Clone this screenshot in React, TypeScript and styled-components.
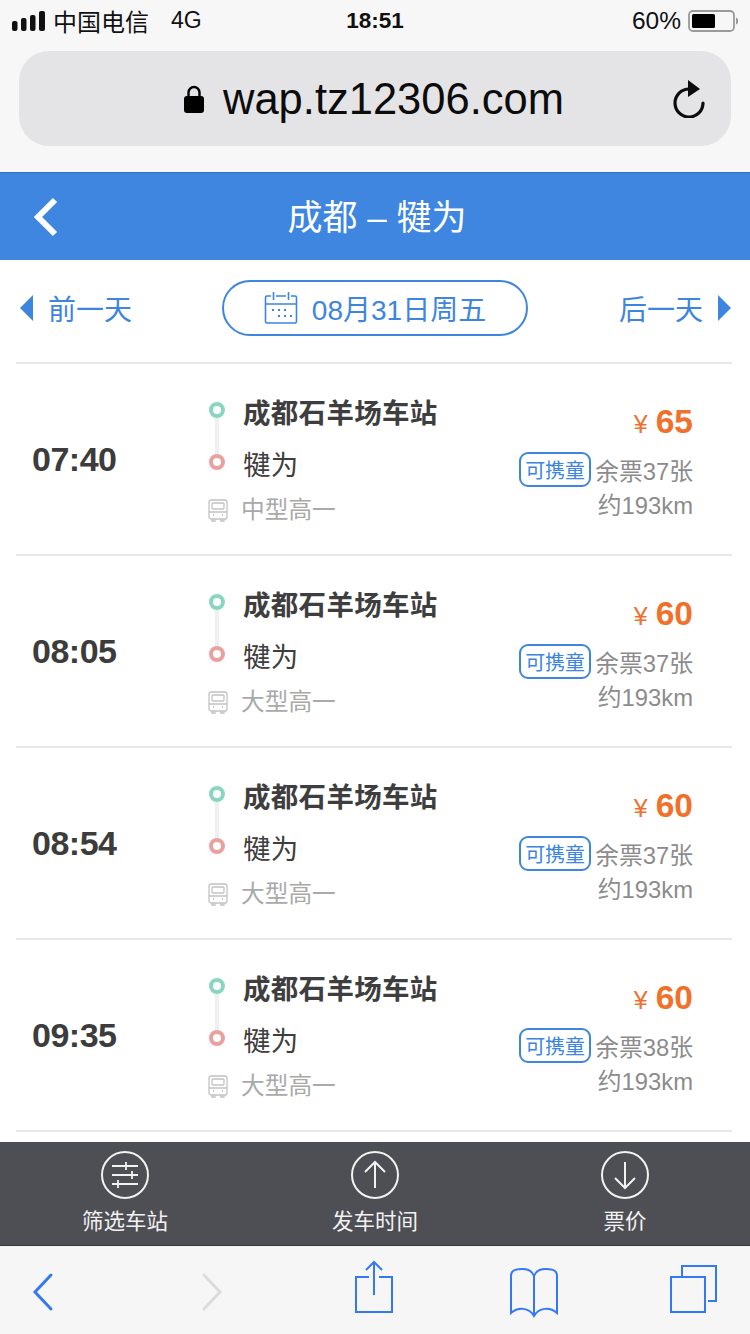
import React from 'react';
import styled, { createGlobalStyle } from 'styled-components';

const blue = '#3d85de';
const cjk = '"Liberation Sans", "Noto Sans CJK SC", sans-serif';

const GlobalStyle = createGlobalStyle`
  html, body { margin: 0; padding: 0; background: #fff; }
  body { font-family: ${cjk}; }
  * { box-sizing: border-box; }
`;

const Page = styled.div`
  width: 750px;
  height: 1334px;
  display: flex;
  flex-direction: column;
  overflow: hidden;
  background: #fff;
`;

/* safari chrome on top */
const TopChrome = styled.div`
  height: 172px;
  background: #f7f7f7;
  padding: 0 19px;
`;

const StatusBar = styled.div`
  height: 51px;
  padding: 0 0 10px;
  margin: 0 -7px;
  display: grid;
  grid-template-columns: 1fr auto 1fr;
  align-items: center;
  color: #111;
  font-size: 24px;
`;

const StatusLeft = styled.div`
  display: flex;
  align-items: center;
`;

const Carrier = styled.span`
  margin-left: 7px;
`;

const Network = styled.span`
  margin-left: 22px;
  font-size: 23px;
`;

const Clock = styled.div`
  font-weight: 700;
  font-size: 22.5px;
`;

const StatusRight = styled.div`
  display: flex;
  align-items: center;
  justify-content: flex-end;
  gap: 7px;
  font-size: 24.5px;
`;

const UrlBar = styled.div`
  height: 95px;
  border-radius: 30px;
  background: #e4e4e6;
  display: grid;
  grid-template-columns: 1fr auto;
  align-items: center;
  padding: 0 25px 0 165px;
`;

const UrlText = styled.div`
  display: flex;
  align-items: center;
  gap: 19px;
  color: #0c0c0c;
  font-size: 43.5px;
`;

const UrlHost = styled.span`
  padding-top: 2px;
`;

const Header = styled.div`
  height: 88px;
  background: #3e86df;
  border-top: 1px solid #3570bd;
  display: grid;
  grid-template-columns: 1fr auto 1fr;
  align-items: center;
  padding-left: 32px;
  color: #fff;
`;

const HeaderTitle = styled.div`
  font-size: 35px;
  margin: -4px 0 0 -28px;
`;

const DateRow = styled.div`
  height: 102px;
  padding: 0 19px 6px 20px;
  display: flex;
  align-items: center;
  justify-content: space-between;
  color: ${blue};
  font-size: 28px;
`;

const DayLink = styled.div`
  display: flex;
  align-items: center;
  gap: 15px;
`;

const DatePill = styled.div`
  width: 306px;
  height: 56px;
  margin-left: -1px;
  border: 2px solid ${blue};
  border-radius: 28px;
  display: flex;
  align-items: center;
  justify-content: center;
  gap: 14px;
`;

const List = styled.div`
  flex: 1;
  margin: 0 18px 0 16px;
  border-top: 2px solid #e8e8e8;
`;

const Trip = styled.div`
  height: 192px;
  border-bottom: 2px solid #e8e8e8;
  display: grid;
  grid-template-columns: 176px 1fr auto;
  padding: 0 39px 0 16px;
  align-items: center;
`;

const DepartTime = styled.div`
  font-size: 34px;
  font-weight: 700;
  color: #3c3c3c;
  letter-spacing: -0.5px;
`;

const Route = styled.div`
  display: grid;
  grid-template-columns: 35px 1fr;
  grid-auto-rows: 52px;
  align-items: center;
  align-content: center;
  padding-top: 6px;
`;

const Marker = styled.div<{ $end?: boolean }>`
  position: relative;
  width: 16px;
  height: 16px;
  margin-left: 1px;
  border-radius: 50%;
  border: 4px solid ${(p) => (p.$end ? '#e9a09f' : '#8bd6c1')};

  ${(p) => (p.$end ? '' : `
    &::after {
      content: '';
      position: absolute;
      left: 2px;
      top: 12px;
      width: 4px;
      height: 36px;
      background: #efefef;
    }
  `)}
`;

const Station = styled.div<{ $strong?: boolean }>`
  font-size: 27.5px;
  letter-spacing: 0.3px;
  color: #3e3e3e;
  font-weight: ${(p) => (p.$strong ? 700 : 400)};
  padding-top: 2px;
`;

const CoachIcon = styled.svg`
  display: block;
  margin-top: -7px;
`;

const CoachType = styled.div`
  font-size: 23.7px;
  color: #a9a9a9;
  margin-left: -2px;
  margin-top: -12px;
`;

const Tickets = styled.div`
  display: flex;
  flex-direction: column;
  align-items: flex-end;
  color: #8c8c8c;
  font-size: 23.8px;
  padding-top: 1px;
`;

const Price = styled.div`
  color: #f0712c;
  font-size: 33.5px;
  font-weight: 700;
  display: flex;
  align-items: baseline;
  gap: 8px;
  height: 46px;
  margin-top: 8px;
`;

const Yen = styled.span`
  font-size: 25px;
  font-weight: 400;
`;

const SeatLine = styled.div`
  display: flex;
  align-items: center;
  gap: 4px;
  margin-top: 2px;
  height: 36px;
`;

const ChildTag = styled.span`
  width: 72px;
  height: 35px;
  border: 2px solid ${blue};
  border-radius: 9px;
  color: ${blue};
  font-size: 20px;
  display: flex;
  align-items: center;
  justify-content: center;
`;

const Distance = styled.div`
  height: 36px;
  line-height: 36px;
  margin-top: 1px;
`;

const ActionBar = styled.div`
  height: 104px;
  background: #4e4f54;
  border-bottom: 1px solid #36363a;
  display: grid;
  grid-template-columns: repeat(3, 250px);
  flex-shrink: 0;
`;

const Action = styled.div`
  display: flex;
  flex-direction: column;
  align-items: center;
  padding-top: 9px;
  gap: 5px;
  color: #f2f2f2;
  font-size: 21.5px;
`;

const SafariBar = styled.div`
  height: 88px;
  background: #f6f6f6;
  flex-shrink: 0;
  padding-left: 13px;
  display: grid;
  grid-template-columns: 169px 162px 160px 159px 60px;
  align-items: center;
`;

const ToolIcon = styled.svg`
  display: block;
`;

const trips = [
  { time: '07:40', type: '中型高一', price: 65, left: 37 },
  { time: '08:05', type: '大型高一', price: 60, left: 37 },
  { time: '08:54', type: '大型高一', price: 60, left: 37 },
  { time: '09:35', type: '大型高一', price: 60, left: 38 },
];

const Triangle = ({ flip }: { flip?: boolean }) => (
  <svg width="13" height="26" viewBox="0 0 13 26">
    <path d={flip ? 'M0 0L13 13L0 26Z' : 'M13 0L0 13L13 26Z'} fill={blue} />
  </svg>
);

export default function App() {
  return (
    <Page>
      <GlobalStyle />
      <TopChrome>
        <StatusBar>
          <StatusLeft>
            <svg width="34" height="20" viewBox="0 0 34 20">
              <rect x="0" y="10" width="5.500" height="10" rx="2" fill="#111" />
              <rect x="9" y="7" width="5.500" height="13" rx="2" fill="#111" />
              <rect x="18" y="4" width="5.500" height="16" rx="2" fill="#111" />
              <rect x="27" y="0" width="6" height="20" rx="2" fill="#111" />
            </svg>
            <Carrier>中国电信</Carrier>
            <Network>4G</Network>
          </StatusLeft>
          <Clock>18:51</Clock>
          <StatusRight>
            <span>60%</span>
            <svg width="50" height="22" viewBox="0 0 50 22">
              <rect x="1" y="1" width="45" height="20" rx="4" fill="none" stroke="#9a9a9a" strokeWidth="1.800" />
              <rect x="4" y="4" width="23" height="14" rx="1.500" fill="#000" />
              <path d="M48 7.500L50 9v4l-2 1.500z" fill="#9a9a9a" />
            </svg>
          </StatusRight>
        </StatusBar>
        <UrlBar>
          <UrlText>
            <svg width="20" height="30" viewBox="0 0 20 30">
              <path d="M4.500 13V8.500a5.500 5.500 0 0 1 11 0V13" fill="none" stroke="#000" strokeWidth="2.400" />
              <rect x="0" y="12" width="20" height="17" rx="3" fill="#000" />
            </svg>
            <UrlHost>wap.tz12306.com</UrlHost>
          </UrlText>
          <svg width="34" height="38" viewBox="0 0 34 38">
            <path d="M17 9A14 14 0 1 0 31 23" fill="none" stroke="#0c0c0c" strokeWidth="3.200" strokeLinecap="round" />
            <path d="M16 0L28 9L16 17Z" fill="#0c0c0c" />
          </svg>
        </UrlBar>
      </TopChrome>

      <Header>
        <svg width="28" height="40" viewBox="0 0 28 40">
          <path d="M23 3L6 20L23 37" fill="none" stroke="#fff" strokeWidth="6" />
        </svg>
        <HeaderTitle>成都 – 犍为</HeaderTitle>
      </Header>

      <DateRow>
        <DayLink>
          <Triangle />
          <span>前一天</span>
        </DayLink>
        <DatePill>
          <svg width="34" height="34" viewBox="0 0 34 34" fill="none" stroke={blue} strokeWidth="1.600">
            <path d="M7 5H3a1.500 1.500 0 0 0-1.500 1.500v24A1.500 1.500 0 0 0 3 32h28a1.500 1.500 0 0 0 1.500-1.500v-24A1.500 1.500 0 0 0 31 5h-4" />
            <path d="M12 5h10M9.500 1v8M24.500 1v8M1.500 13h31" />
            <path d="M8 19h2M14 19h2M20 19h2M14 25h2M20 25h2M26 25h2" strokeWidth="2" />
          </svg>
          <span>08月31日周五</span>
        </DatePill>
        <DayLink>
          <span>后一天</span>
          <Triangle flip />
        </DayLink>
      </DateRow>

      <List>
        {trips.map((trip) => (
          <Trip key={trip.time}>
            <DepartTime>{trip.time}</DepartTime>
            <Route>
              <Marker />
              <Station $strong>成都石羊场车站</Station>
              <Marker $end />
              <Station>犍为</Station>
              <CoachIcon width="20" height="23" viewBox="0 0 20 23" fill="none" stroke="#c2c2c2" strokeWidth="1.300">
                <rect x="1" y="1" width="18" height="19" rx="2" />
                <rect x="4" y="4" width="12" height="6" rx="1" />
                <path d="M1 13h18M4 20v2h3v-2M13 20v2h3v-2" />
                <path d="M5 16h1M14 16h1" strokeWidth="2" />
              </CoachIcon>
              <CoachType>{trip.type}</CoachType>
            </Route>
            <Tickets>
              <Price>
                <Yen>¥</Yen>
                <span>{trip.price}</span>
              </Price>
              <SeatLine>
                <ChildTag>可携童</ChildTag>
                <span>余票{trip.left}张</span>
              </SeatLine>
              <Distance>约193km</Distance>
            </Tickets>
          </Trip>
        ))}
      </List>

      <ActionBar>
        <Action>
          <svg width="48" height="48" viewBox="0 0 48 48" fill="none" stroke="#f2f2f2" strokeWidth="2">
            <circle cx="24" cy="24" r="23" />
            <path d="M11 15h26M11 24h26M11 33h26" />
            <path d="M25 11v8M31 20v8M17 29v8" strokeWidth="1.800" />
          </svg>
          <span>筛选车站</span>
        </Action>
        <Action>
          <svg width="48" height="48" viewBox="0 0 48 48" fill="none" stroke="#f2f2f2" strokeWidth="2">
            <circle cx="24" cy="24" r="23" />
            <path d="M24 37V12M14 21L24 11L34 21" />
          </svg>
          <span>发车时间</span>
        </Action>
        <Action>
          <svg width="48" height="48" viewBox="0 0 48 48" fill="none" stroke="#f2f2f2" strokeWidth="2">
            <circle cx="24" cy="24" r="23" />
            <path d="M24 11V36M14 27L24 37L34 27" />
          </svg>
          <span>票价</span>
        </Action>
      </ActionBar>

      <SafariBar>
        <ToolIcon width="60" height="60" viewBox="0 0 60 60" fill="none" stroke="#3478f6" strokeWidth="3" strokeLinecap="round">
          <path d="M38 15L22 32L38 49" />
        </ToolIcon>
        <ToolIcon width="60" height="60" viewBox="0 0 60 60" fill="none" stroke="#dcdcdc" strokeWidth="3" strokeLinecap="round">
          <path d="M22 15L38 32L22 49" />
        </ToolIcon>
        <ToolIcon width="60" height="60" viewBox="0 0 60 60" fill="none" stroke="#3478f6" strokeWidth="2">
          <path d="M25 17H12V52H48V17H35" />
          <path d="M30 35V2M22 10L30 2L38 10" />
        </ToolIcon>
        <ToolIcon width="60" height="60" viewBox="0 0 60 60" fill="none" stroke="#3478f6" strokeWidth="2">
          <path d="M30 16C28 11 24 9 19 9C14 9 7 9 7 16V53C14 47 25 47 30 56C35 47 46 47 53 53V16C53 9 46 9 41 9C36 9 32 11 30 16V56" />
        </ToolIcon>
        <ToolIcon width="60" height="60" viewBox="0 0 60 60" fill="none" stroke="#3478f6" strokeWidth="2">
          <rect x="8" y="17" width="34" height="35" />
          <path d="M19 17V6H53V41H45" />
        </ToolIcon>
      </SafariBar>
    </Page>
  );
}
